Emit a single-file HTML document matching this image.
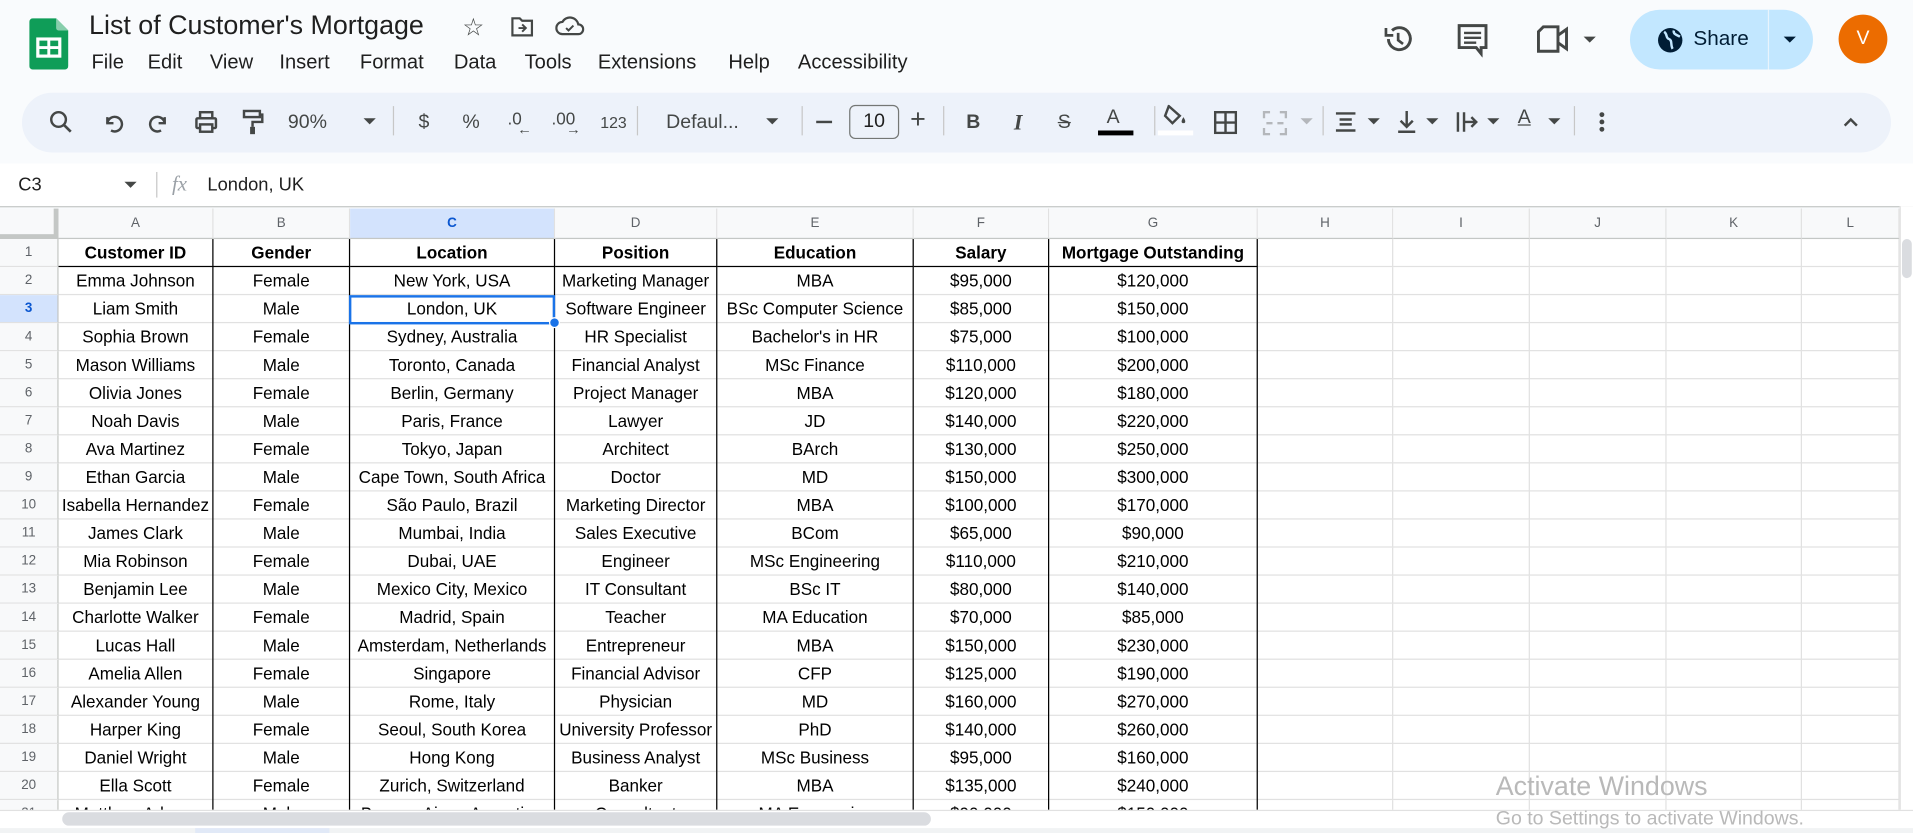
<!DOCTYPE html>
<html><head><meta charset="utf-8">
<style>
*{box-sizing:border-box;margin:0;padding:0}
html,body{width:1913px;height:833px;overflow:hidden;background:#f9fbfd}
body{font-family:"Liberation Sans",Arial,sans-serif;color:#1f1f1f}
#w{position:absolute;left:0;top:0;width:1568px;height:683px;transform:scale(1.22003,1.21962);transform-origin:0 0;background:#f9fbfd}
.a{position:absolute}
.menu span{position:absolute;top:42px;font-size:16.5px;color:#1f1f1f}
.tb{position:absolute;top:92px;font-size:15px;color:#444746}
.sep{position:absolute;top:87px;width:1px;height:24px;background:#c7c7c7}
.car{position:absolute;width:0;height:0;border-left:5px solid transparent;border-right:5px solid transparent;border-top:5px solid #444746}
#grid{position:absolute;left:0;top:171px;width:1557px}
.r{display:flex;height:23px}
.r div{height:23px;border-right:1px solid #e1e1e1;border-bottom:1px solid #e1e1e1;font-size:14px;line-height:22px;text-align:center;white-space:nowrap;overflow:hidden;color:#000}
.r div:first-child{background:#f8f9fa;color:#5f6368;font-size:11px;border-right:1px solid #c4c7c5}
.h{height:25px}
.h div{height:25px;background:#f8f9fa;color:#5f6368;font-size:11px;line-height:24px;border-bottom:1px solid #c4c7c5}
.b div{font-weight:bold}
.c0{width:48px}.c1{width:127px}.c2{width:112px}.c3{width:168px}.c4{width:133px}.c5{width:161px}.c6{width:111px}.c7{width:171px}.c8{width:111px}.c9{width:112px}.c10{width:112px}.c11{width:111px}.c12{width:80px}
.vl{position:absolute;top:196px;height:468px;width:1px;background:#000}
</style></head><body><div id="w">
<svg class="a" style="left:24px;top:15px" width="32" height="42" viewBox="0 0 32 42"><path d="M3 0h19l10 10v29a3 3 0 0 1-3 3H3a3 3 0 0 1-3-3V3a3 3 0 0 1 3-3z" fill="#0f9d58"/><path d="M22 0l10 10h-8a2 2 0 0 1-2-2z" fill="#87ceac"/><rect x="7" y="17" width="18" height="14" fill="none" stroke="#fff" stroke-width="2.6"/><line x1="16" y1="17" x2="16" y2="31" stroke="#fff" stroke-width="2.4"/><line x1="7" y1="24" x2="25" y2="24" stroke="#fff" stroke-width="2.4"/></svg>
<div class="a" style="left:73px;top:8px;font-size:22px;color:#1f1f1f">List of Customer's Mortgage</div>
<div class="a" style="left:379px;top:10px;font-size:20px;color:#444746">☆</div>
<svg class="a" style="left:418px;top:13px" width="20" height="18" viewBox="0 0 20 18"><path d="M2 2h6l2 2h8v12H2z" fill="none" stroke="#444746" stroke-width="1.8"/><path d="M7 10h6M10 7l3 3-3 3" fill="none" stroke="#444746" stroke-width="1.6"/></svg>
<svg class="a" style="left:455px;top:12px" width="24" height="18" viewBox="0 0 24 18"><path d="M6 16a5 5 0 0 1 0-10 7 7 0 0 1 13 2 4 4 0 0 1 0 8z" fill="none" stroke="#444746" stroke-width="1.8"/><path d="M9 11l2 2 4-4" fill="none" stroke="#444746" stroke-width="1.6"/></svg>
<div class="menu"><span style="left:75px">File</span><span style="left:121px">Edit</span><span style="left:172px">View</span><span style="left:229px">Insert</span><span style="left:295px">Format</span><span style="left:372px">Data</span><span style="left:430px">Tools</span><span style="left:490px">Extensions</span><span style="left:597px">Help</span><span style="left:654px">Accessibility</span></div>
<svg class="a" style="left:1133px;top:19px" width="26" height="26" viewBox="0 0 26 26"><path d="M5 13a9 9 0 1 0 3-7" fill="none" stroke="#444746" stroke-width="2.4"/><path d="M3 4v6h6" fill="none" stroke="#444746" stroke-width="2.2"/><path d="M13 8v6l4 3" fill="none" stroke="#444746" stroke-width="2.2"/></svg>
<svg class="a" style="left:1194px;top:19px" width="26" height="28" viewBox="0 0 26 28"><path d="M2 2h22v18h-4v5l-4-5H2z" fill="none" stroke="#444746" stroke-width="2.4"/><path d="M6 8h14M6 12h14M6 16h10" stroke="#444746" stroke-width="2"/></svg>
<svg class="a" style="left:1259px;top:20px" width="30" height="24" viewBox="0 0 30 24"><path d="M2 6l4-4h12v20H2z" fill="none" stroke="#444746" stroke-width="2.4"/><path d="M18 9l7-5v16l-7-5" fill="none" stroke="#444746" stroke-width="2.4"/></svg>
<div class="car" style="left:1298px;top:30px"></div>
<div class="a" style="left:1336px;top:8px;width:150px;height:49px;border-radius:25px;background:#c2e7ff"></div>
<div class="a" style="left:1449px;top:8px;width:1px;height:49px;background:#e8f4fd"></div>
<svg class="a" style="left:1358px;top:22px" width="22" height="22" viewBox="0 0 22 22"><circle cx="11" cy="11" r="10" fill="#001d35"/><path d="M6 4c3 2 1 5 4 6s1 5 3 8M14 3c-1 3 3 4 5 5" fill="none" stroke="#c2e7ff" stroke-width="2"/></svg>
<div class="a" style="left:1388px;top:22px;font-size:17px;color:#001d35">Share</div>
<div class="car" style="left:1462px;top:30px;border-top-color:#001d35"></div>
<div class="a" style="left:1507px;top:12px;width:40px;height:40px;border-radius:50%;background:#ec6c00;color:#fff;font-size:16px;text-align:center;line-height:40px">V</div>
<div class="a" style="left:18px;top:76px;width:1532px;height:49px;border-radius:25px;background:#edf2fa"></div>
<svg class="a" style="left:40px;top:90px" width="20" height="20" viewBox="0 0 20 20"><circle cx="8" cy="8" r="6" fill="none" stroke="#444746" stroke-width="2"/><path d="M12 12l6 6" stroke="#444746" stroke-width="2.2"/></svg>
<svg class="a" style="left:84px;top:92px" width="18" height="18" viewBox="0 0 18 18"><path d="M4 4v5h5" fill="none" stroke="#444746" stroke-width="2"/><path d="M4 9a6 6 0 1 1 3 6" fill="none" stroke="#444746" stroke-width="2"/></svg>
<svg class="a" style="left:121px;top:92px" width="18" height="18" viewBox="0 0 18 18"><path d="M14 4v5H9" fill="none" stroke="#444746" stroke-width="2"/><path d="M14 9a6 6 0 1 0-3 6" fill="none" stroke="#444746" stroke-width="2"/></svg>
<svg class="a" style="left:159px;top:90px" width="20" height="20" viewBox="0 0 20 20"><rect x="2" y="7" width="16" height="8" rx="1" fill="none" stroke="#444746" stroke-width="2"/><rect x="5" y="2" width="10" height="5" fill="none" stroke="#444746" stroke-width="2"/><rect x="5" y="12" width="10" height="6" fill="#edf2fa" stroke="#444746" stroke-width="2"/></svg>
<svg class="a" style="left:198px;top:89px" width="18" height="22" viewBox="0 0 18 22"><rect x="2" y="2" width="13" height="5" fill="none" stroke="#444746" stroke-width="2"/><path d="M15 5h2v6H9v4" fill="none" stroke="#444746" stroke-width="2"/><rect x="7" y="15" width="4" height="6" fill="#444746"/></svg>
<div class="tb" style="left:236px;font-size:16px">90%</div><div class="car" style="left:298px;top:97px"></div>
<div class="sep" style="left:322px"></div>
<div class="tb" style="left:343px;font-size:16px">$</div>
<div class="tb" style="left:379px;font-size:16px">%</div>
<div class="tb" style="left:416px;font-size:14px;top:89px">.0</div><div class="a" style="left:424px;top:99px;font-size:12px;color:#444746">←</div>
<div class="tb" style="left:452px;font-size:14px;top:89px">.00</div><div class="a" style="left:464px;top:99px;font-size:12px;color:#444746">→</div>
<div class="tb" style="left:492px;font-size:13px;top:93px">123</div>
<div class="sep" style="left:522px"></div>
<div class="tb" style="left:546px;font-size:16px">Defaul...</div><div class="car" style="left:628px;top:97px"></div>
<div class="sep" style="left:657px"></div>
<div class="a" style="left:669px;top:99px;width:13px;height:2px;background:#444746"></div>
<div class="a" style="left:696px;top:86px;width:41px;height:28px;border:1px solid #747775;border-radius:5px;text-align:center;font-size:16px;line-height:26px;color:#1f1f1f">10</div>
<div class="tb" style="left:746px;font-size:22px;top:85px">+</div>
<div class="sep" style="left:773px"></div>
<div class="tb" style="left:792px;font-weight:bold;font-size:16px">B</div>
<div class="tb" style="left:831px;font-style:italic;font-family:'Liberation Serif',serif;font-size:18px;top:90px;font-weight:bold">I</div>
<div class="tb" style="left:867px;font-size:16px;text-decoration:line-through">S</div>
<div class="tb" style="left:907px;font-size:16px;top:88px">A</div><div class="a" style="left:900px;top:107px;width:29px;height:4px;background:#000"></div>
<div class="sep" style="left:946px"></div>
<svg class="a" style="left:953px;top:86px" width="22" height="18" viewBox="0 0 22 18"><path d="M5 1l9 8-6 6-6-6z" fill="none" stroke="#444746" stroke-width="2"/><path d="M17 10c2 3 2 5 0 5s-2-2 0-5z" fill="#444746"/></svg>
<div class="a" style="left:949px;top:107px;width:29px;height:4px;background:#fff"></div>
<svg class="a" style="left:995px;top:91px" width="19" height="19" viewBox="0 0 19 19"><rect x="1" y="1" width="17" height="17" fill="none" stroke="#444746" stroke-width="2"/><path d="M9.5 1v17M1 9.5h17" stroke="#444746" stroke-width="2"/></svg>
<svg class="a" style="left:1035px;top:91px" width="20" height="20" viewBox="0 0 20 20"><path d="M1 6V1h5M14 1h5v5M19 14v5h-5M6 19H1v-5M3 10h5M17 10h-5" fill="none" stroke="#b4b7bb" stroke-width="2"/></svg>
<div class="car" style="left:1066px;top:97px;border-top-color:#b4b7bb"></div>
<div class="sep" style="left:1084px"></div>
<svg class="a" style="left:1094px;top:91px" width="18" height="18" viewBox="0 0 18 18"><path d="M1 2h16M4 7h10M4 11h10M1 16h16" stroke="#444746" stroke-width="2"/></svg><div class="car" style="left:1121px;top:97px"></div>
<svg class="a" style="left:1144px;top:90px" width="18" height="20" viewBox="0 0 18 20"><path d="M9 1v12M4 9l5 5 5-5M2 18h14" fill="none" stroke="#444746" stroke-width="2"/></svg><div class="car" style="left:1169px;top:97px"></div>
<svg class="a" style="left:1193px;top:90px" width="20" height="20" viewBox="0 0 20 20"><path d="M2 2v16M7 2v16M7 10h10M13 6l4 4-4 4" fill="none" stroke="#444746" stroke-width="2"/></svg><div class="car" style="left:1219px;top:97px"></div>
<div class="tb" style="left:1244px;font-size:16px;top:88px;text-decoration:underline">A</div><div class="car" style="left:1269px;top:97px"></div>
<div class="sep" style="left:1290px"></div>
<svg class="a" style="left:1309px;top:90px" width="8" height="20" viewBox="0 0 8 20"><circle cx="4" cy="4" r="2" fill="#444746"/><circle cx="4" cy="10" r="2" fill="#444746"/><circle cx="4" cy="16" r="2" fill="#444746"/></svg>
<svg class="a" style="left:1510px;top:95px" width="14" height="10" viewBox="0 0 14 10"><path d="M2 8l5-5 5 5" fill="none" stroke="#444746" stroke-width="2"/></svg>
<div class="a" style="left:0;top:134px;width:1568px;height:36px;background:#fff;border-bottom:1px solid #c4c7c5"></div>
<div class="a" style="left:15px;top:143px;font-size:15px">C3</div>
<div class="car" style="left:102px;top:149px"></div>
<div class="a" style="left:128px;top:141px;width:1px;height:21px;background:#c7c7c7"></div>
<div class="a" style="left:141px;top:141px;font-size:17px;font-style:italic;font-family:'Liberation Serif',serif;color:#9aa0a6">fx</div>
<div class="a" style="left:170px;top:143px;font-size:15px">London, UK</div>
<div id="grid" style="background:#fff">
<div class="r h"><div class="c0" style="border-right:4px solid #c4c7c5;border-bottom:4px solid #c4c7c5"></div><div class="c1">A</div><div class="c2">B</div><div class="c3" style="background:#d3e3fd;color:#0b57d0;font-weight:bold">C</div><div class="c4">D</div><div class="c5">E</div><div class="c6">F</div><div class="c7">G</div><div class="c8">H</div><div class="c9">I</div><div class="c10">J</div><div class="c11">K</div><div class="c12">L</div></div>
<div class="r b"><div class="c0" style="font-weight:normal">1</div><div class="c1" style="border-bottom-color:#000">Customer ID</div><div class="c2" style="border-bottom-color:#000">Gender</div><div class="c3" style="border-bottom-color:#000">Location</div><div class="c4" style="border-bottom-color:#000">Position</div><div class="c5" style="border-bottom-color:#000">Education</div><div class="c6" style="border-bottom-color:#000">Salary</div><div class="c7" style="border-bottom-color:#000">Mortgage Outstanding</div><div class="c8"></div><div class="c9"></div><div class="c10"></div><div class="c11"></div><div class="c12"></div></div>
<div class="r"><div class="c0">2</div><div class="c1">Emma Johnson</div><div class="c2">Female</div><div class="c3">New York, USA</div><div class="c4">Marketing Manager</div><div class="c5">MBA</div><div class="c6">$95,000</div><div class="c7">$120,000</div><div class="c8"></div><div class="c9"></div><div class="c10"></div><div class="c11"></div><div class="c12"></div></div>
<div class="r"><div class="c0" style="background:#d3e3fd;color:#0b57d0;font-weight:bold">3</div><div class="c1">Liam Smith</div><div class="c2">Male</div><div class="c3">London, UK</div><div class="c4">Software Engineer</div><div class="c5">BSc Computer Science</div><div class="c6">$85,000</div><div class="c7">$150,000</div><div class="c8"></div><div class="c9"></div><div class="c10"></div><div class="c11"></div><div class="c12"></div></div>
<div class="r"><div class="c0">4</div><div class="c1">Sophia Brown</div><div class="c2">Female</div><div class="c3">Sydney, Australia</div><div class="c4">HR Specialist</div><div class="c5">Bachelor's in HR</div><div class="c6">$75,000</div><div class="c7">$100,000</div><div class="c8"></div><div class="c9"></div><div class="c10"></div><div class="c11"></div><div class="c12"></div></div>
<div class="r"><div class="c0">5</div><div class="c1">Mason Williams</div><div class="c2">Male</div><div class="c3">Toronto, Canada</div><div class="c4">Financial Analyst</div><div class="c5">MSc Finance</div><div class="c6">$110,000</div><div class="c7">$200,000</div><div class="c8"></div><div class="c9"></div><div class="c10"></div><div class="c11"></div><div class="c12"></div></div>
<div class="r"><div class="c0">6</div><div class="c1">Olivia Jones</div><div class="c2">Female</div><div class="c3">Berlin, Germany</div><div class="c4">Project Manager</div><div class="c5">MBA</div><div class="c6">$120,000</div><div class="c7">$180,000</div><div class="c8"></div><div class="c9"></div><div class="c10"></div><div class="c11"></div><div class="c12"></div></div>
<div class="r"><div class="c0">7</div><div class="c1">Noah Davis</div><div class="c2">Male</div><div class="c3">Paris, France</div><div class="c4">Lawyer</div><div class="c5">JD</div><div class="c6">$140,000</div><div class="c7">$220,000</div><div class="c8"></div><div class="c9"></div><div class="c10"></div><div class="c11"></div><div class="c12"></div></div>
<div class="r"><div class="c0">8</div><div class="c1">Ava Martinez</div><div class="c2">Female</div><div class="c3">Tokyo, Japan</div><div class="c4">Architect</div><div class="c5">BArch</div><div class="c6">$130,000</div><div class="c7">$250,000</div><div class="c8"></div><div class="c9"></div><div class="c10"></div><div class="c11"></div><div class="c12"></div></div>
<div class="r"><div class="c0">9</div><div class="c1">Ethan Garcia</div><div class="c2">Male</div><div class="c3">Cape Town, South Africa</div><div class="c4">Doctor</div><div class="c5">MD</div><div class="c6">$150,000</div><div class="c7">$300,000</div><div class="c8"></div><div class="c9"></div><div class="c10"></div><div class="c11"></div><div class="c12"></div></div>
<div class="r"><div class="c0">10</div><div class="c1">Isabella Hernandez</div><div class="c2">Female</div><div class="c3">São Paulo, Brazil</div><div class="c4">Marketing Director</div><div class="c5">MBA</div><div class="c6">$100,000</div><div class="c7">$170,000</div><div class="c8"></div><div class="c9"></div><div class="c10"></div><div class="c11"></div><div class="c12"></div></div>
<div class="r"><div class="c0">11</div><div class="c1">James Clark</div><div class="c2">Male</div><div class="c3">Mumbai, India</div><div class="c4">Sales Executive</div><div class="c5">BCom</div><div class="c6">$65,000</div><div class="c7">$90,000</div><div class="c8"></div><div class="c9"></div><div class="c10"></div><div class="c11"></div><div class="c12"></div></div>
<div class="r"><div class="c0">12</div><div class="c1">Mia Robinson</div><div class="c2">Female</div><div class="c3">Dubai, UAE</div><div class="c4">Engineer</div><div class="c5">MSc Engineering</div><div class="c6">$110,000</div><div class="c7">$210,000</div><div class="c8"></div><div class="c9"></div><div class="c10"></div><div class="c11"></div><div class="c12"></div></div>
<div class="r"><div class="c0">13</div><div class="c1">Benjamin Lee</div><div class="c2">Male</div><div class="c3">Mexico City, Mexico</div><div class="c4">IT Consultant</div><div class="c5">BSc IT</div><div class="c6">$80,000</div><div class="c7">$140,000</div><div class="c8"></div><div class="c9"></div><div class="c10"></div><div class="c11"></div><div class="c12"></div></div>
<div class="r"><div class="c0">14</div><div class="c1">Charlotte Walker</div><div class="c2">Female</div><div class="c3">Madrid, Spain</div><div class="c4">Teacher</div><div class="c5">MA Education</div><div class="c6">$70,000</div><div class="c7">$85,000</div><div class="c8"></div><div class="c9"></div><div class="c10"></div><div class="c11"></div><div class="c12"></div></div>
<div class="r"><div class="c0">15</div><div class="c1">Lucas Hall</div><div class="c2">Male</div><div class="c3">Amsterdam, Netherlands</div><div class="c4">Entrepreneur</div><div class="c5">MBA</div><div class="c6">$150,000</div><div class="c7">$230,000</div><div class="c8"></div><div class="c9"></div><div class="c10"></div><div class="c11"></div><div class="c12"></div></div>
<div class="r"><div class="c0">16</div><div class="c1">Amelia Allen</div><div class="c2">Female</div><div class="c3">Singapore</div><div class="c4">Financial Advisor</div><div class="c5">CFP</div><div class="c6">$125,000</div><div class="c7">$190,000</div><div class="c8"></div><div class="c9"></div><div class="c10"></div><div class="c11"></div><div class="c12"></div></div>
<div class="r"><div class="c0">17</div><div class="c1">Alexander Young</div><div class="c2">Male</div><div class="c3">Rome, Italy</div><div class="c4">Physician</div><div class="c5">MD</div><div class="c6">$160,000</div><div class="c7">$270,000</div><div class="c8"></div><div class="c9"></div><div class="c10"></div><div class="c11"></div><div class="c12"></div></div>
<div class="r"><div class="c0">18</div><div class="c1">Harper King</div><div class="c2">Female</div><div class="c3">Seoul, South Korea</div><div class="c4">University Professor</div><div class="c5">PhD</div><div class="c6">$140,000</div><div class="c7">$260,000</div><div class="c8"></div><div class="c9"></div><div class="c10"></div><div class="c11"></div><div class="c12"></div></div>
<div class="r"><div class="c0">19</div><div class="c1">Daniel Wright</div><div class="c2">Male</div><div class="c3">Hong Kong</div><div class="c4">Business Analyst</div><div class="c5">MSc Business</div><div class="c6">$95,000</div><div class="c7">$160,000</div><div class="c8"></div><div class="c9"></div><div class="c10"></div><div class="c11"></div><div class="c12"></div></div>
<div class="r"><div class="c0">20</div><div class="c1">Ella Scott</div><div class="c2">Female</div><div class="c3">Zurich, Switzerland</div><div class="c4">Banker</div><div class="c5">MBA</div><div class="c6">$135,000</div><div class="c7">$240,000</div><div class="c8"></div><div class="c9"></div><div class="c10"></div><div class="c11"></div><div class="c12"></div></div>
<div class="r"><div class="c0">21</div><div class="c1">Matthew Adams</div><div class="c2">Male</div><div class="c3">Buenos Aires, Argentina</div><div class="c4">Consultant</div><div class="c5">MA Economics</div><div class="c6">$90,000</div><div class="c7">$150,000</div><div class="c8"></div><div class="c9"></div><div class="c10"></div><div class="c11"></div><div class="c12"></div></div>
</div>
<div class="vl" style="left:174px"></div><div class="vl" style="left:286px"></div><div class="vl" style="left:454px"></div><div class="vl" style="left:587px"></div><div class="vl" style="left:748px"></div><div class="vl" style="left:859px"></div><div class="vl" style="left:1030px"></div>
<div class="a" style="left:286px;top:242px;width:169px;height:24px;border:2px solid #1a73e8"></div>
<div class="a" style="left:450px;top:260px;width:9px;height:9px;border-radius:50%;background:#1a73e8;border:1px solid #fff"></div>
<div class="a" style="left:1557px;top:169px;width:11px;height:495px;background:#fff;border-left:1px solid #e1e1e1"></div>
<div class="a" style="left:1559px;top:196px;width:8px;height:32px;border-radius:4px;background:#dadce0"></div>
<div class="a" style="left:0;top:664px;width:1568px;height:19px;background:#fff;border-top:1px solid #e1e1e1"></div>
<div class="a" style="left:51px;top:666px;width:712px;height:11px;border-radius:6px;background:#dadce0"></div>
<div class="a" style="left:0;top:679px;width:1568px;height:4px;background:#f1f3f4"></div>
<div class="a" style="left:160px;top:679px;width:110px;height:4px;background:#e1e9f7"></div>
<div class="a" style="left:1226px;top:632px;font-size:22px;color:#b9b9b9">Activate Windows</div>
<div class="a" style="left:1226px;top:663px;font-size:16px;color:#b9b9b9">Go to Settings to activate Windows.</div>
</div></body></html>
